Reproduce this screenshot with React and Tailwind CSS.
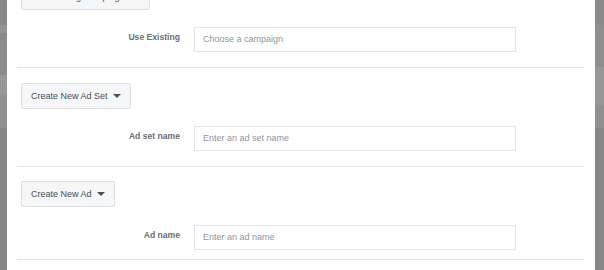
import React from "react";

const font = { fontFamily: '"Liberation Sans", Arial, sans-serif' };

function Caret() {
  return (
    <span className="ml-[5px] inline-block h-0 w-0 border-l-[4px] border-r-[4px] border-t-[4px] border-l-transparent border-r-transparent border-t-[#4b4f56]" />
  );
}

function DropButton({ label, className = "" }) {
  return (
    <div
      className={`ml-[14px] flex h-[26px] items-center rounded-[2px] border border-[#dddfe2] bg-[#f5f6f7] pl-[9px] text-[9px] text-[#4b4f56] ${className}`}
    >
      <span className="leading-none">{label}</span>
      <Caret />
    </div>
  );
}

function Row({ label, placeholder, className = "" }) {
  return (
    <div className={`flex items-center ${className}`}>
      <div className="mb-[4px] w-[173px] text-right text-[8.6px] font-bold text-[#6a6e75] leading-none">
        {label}
      </div>
      <div className="ml-[14px] flex h-[25px] w-[322px] items-center border border-[#e3e4e7] bg-white pl-[8px] text-[9px] text-[#90949c] leading-none">
        {placeholder}
      </div>
    </div>
  );
}

function Divider({ className = "" }) {
  return <div className={`ml-[10px] mr-[11px] h-px bg-[#e3e4e7] ${className}`} />;
}

function Strip({ bands }) {
  return (
    <div className="flex h-full flex-col">
      {bands.map((b, i) => (
        <div key={i} style={{ height: b[0], background: b[1] }} className={b[0] === "auto" ? "flex-1" : ""} />
      ))}
    </div>
  );
}

export default function App() {
  return (
    <div className="flex h-[270px] w-[604px] overflow-hidden bg-white" style={font}>
      <div className="w-[7px] shrink-0">
        <Strip
          bands={[
            [25, "#888888"],
            [8, "#959595"],
            [42, "#8b8b8b"],
            [20, "#979797"],
            [33, "#929292"],
            ["auto", "#868686"],
          ]}
        />
      </div>
      <div className="flex-1 overflow-hidden bg-white">
        <DropButton label="Use Existing Campaign" className="-mt-[16px] w-[129px]" />
        <Row label="Use Existing" placeholder="Choose a campaign" className="mt-[17px]" />
        <Divider className="mt-[15px]" />

        <DropButton label="Create New Ad Set" className="mt-[15px] w-[110px]" />
        <Row label="Ad set name" placeholder="Enter an ad set name" className="mt-[17px]" />
        <Divider className="mt-[15px]" />

        <DropButton label="Create New Ad" className="mt-[14px] w-[94px]" />
        <Row label="Ad name" placeholder="Enter an ad name" className="mt-[18px]" />
        <Divider className="mt-[9px]" />
      </div>
      <div className="w-[9px] shrink-0">
        <Strip
          bands={[
            [25, "#8a8a8a"],
            [42, "#8e8e8e"],
            [38, "#969696"],
            [23, "#909090"],
            ["auto", "#878787"],
          ]}
        />
      </div>
    </div>
  );
}
